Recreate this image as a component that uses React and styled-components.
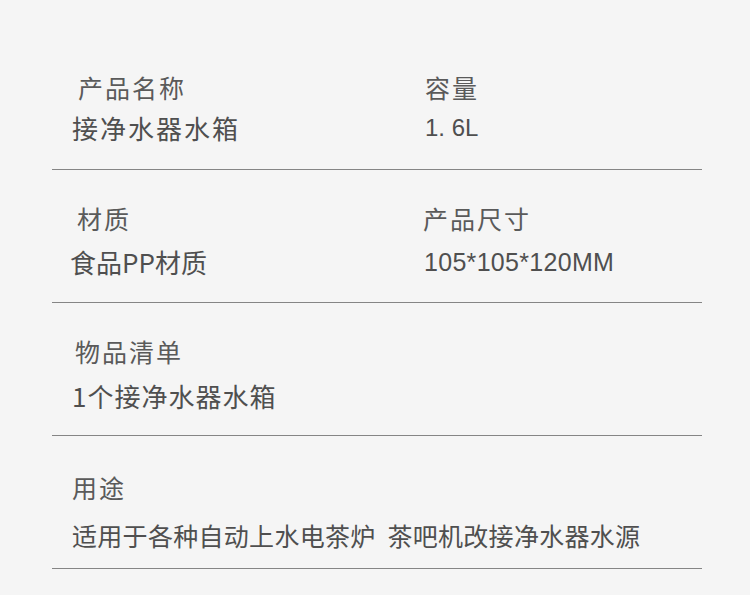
import React from 'react';
import styled, { createGlobalStyle } from 'styled-components';

const GlobalStyle = createGlobalStyle`
	html, body {
		margin: 0;
		padding: 0;
		background: #f5f5f5;
	}
	body {
		font-family: 'Noto Sans CJK SC', 'Noto Sans', sans-serif;
		color: #555;
	}
`;

const Page = styled.div`
	width: 750px;
	height: 595px;
	overflow: hidden;
	padding-top: 37px;
	box-sizing: border-box;
`;

const List = styled.div`
	margin-left: 52px;
	width: 650px;
`;

const Section = styled.div`
	display: grid;
	grid-template-columns: 352px 1fr;
	height: 133px;
	box-sizing: border-box;
	padding: ${(p) => p.$top || 33}px 0 0 20px;
	border-bottom: 1px solid #858585;
`;

const Field = styled.div`
	display: flex;
	flex-direction: column;
	gap: ${(p) => p.$gap || 10}px;
`;

const Label = styled.div`
	font-size: 25px;
	line-height: 30px;
	letter-spacing: 2px;
	color: #5a5a5a;
	margin-left: ${(p) => p.$dx || 0}px;
	white-space: nowrap;
`;

const Value = styled.div`
	font-size: ${(p) => p.$size || 26}px;
	line-height: 30px;
	letter-spacing: ${(p) => (p.$ls === undefined ? 1.5 : p.$ls)}px;
	color: #4f4f4f;
	margin-left: ${(p) => p.$dx || 0}px;
	white-space: nowrap;
	font-family: ${(p) =>
		p.$latin
			? "'Liberation Sans', 'Noto Sans CJK SC', sans-serif"
			: "'Noto Sans CJK SC', 'Noto Sans', sans-serif"};
`;

export default function App() {
	return (
		<Page>
			<GlobalStyle />
			<List>
				<Section $top={35}>
					<Field $gap={11}>
						<Label $dx={6}>产品名称</Label>
						<Value $ls={2}>接净水器水箱</Value>
					</Field>
					<Field $gap={11}>
						<Label $dx={1}>容量</Label>
						<Value $dx={1} $latin $ls={0} $size={24}>1. 6L</Value>
					</Field>
				</Section>
				<Section>
					<Field $gap={14}>
						<Label $dx={5}>材质</Label>
						<Value $dx={-2} $ls={0}>食品PP材质</Value>
					</Field>
					<Field $gap={14}>
						<Label $dx={-1}>产品尺寸</Label>
						<Value $latin $ls={0.3} $size={25}>105*105*120MM</Value>
					</Field>
				</Section>
				<Section>
					<Field $gap={15}>
						<Label $dx={3}>物品清单</Label>
						<Value $ls={1}>1个接净水器水箱</Value>
					</Field>
				</Section>
				<Section $top={36}>
					<Field $gap={18}>
						<Label>用途</Label>
						<Value $size={25} $ls={0.3}>适用于各种自动上水电茶炉&nbsp;&nbsp;茶吧机改接净水器水源</Value>
					</Field>
				</Section>
			</List>
		</Page>
	);
}
